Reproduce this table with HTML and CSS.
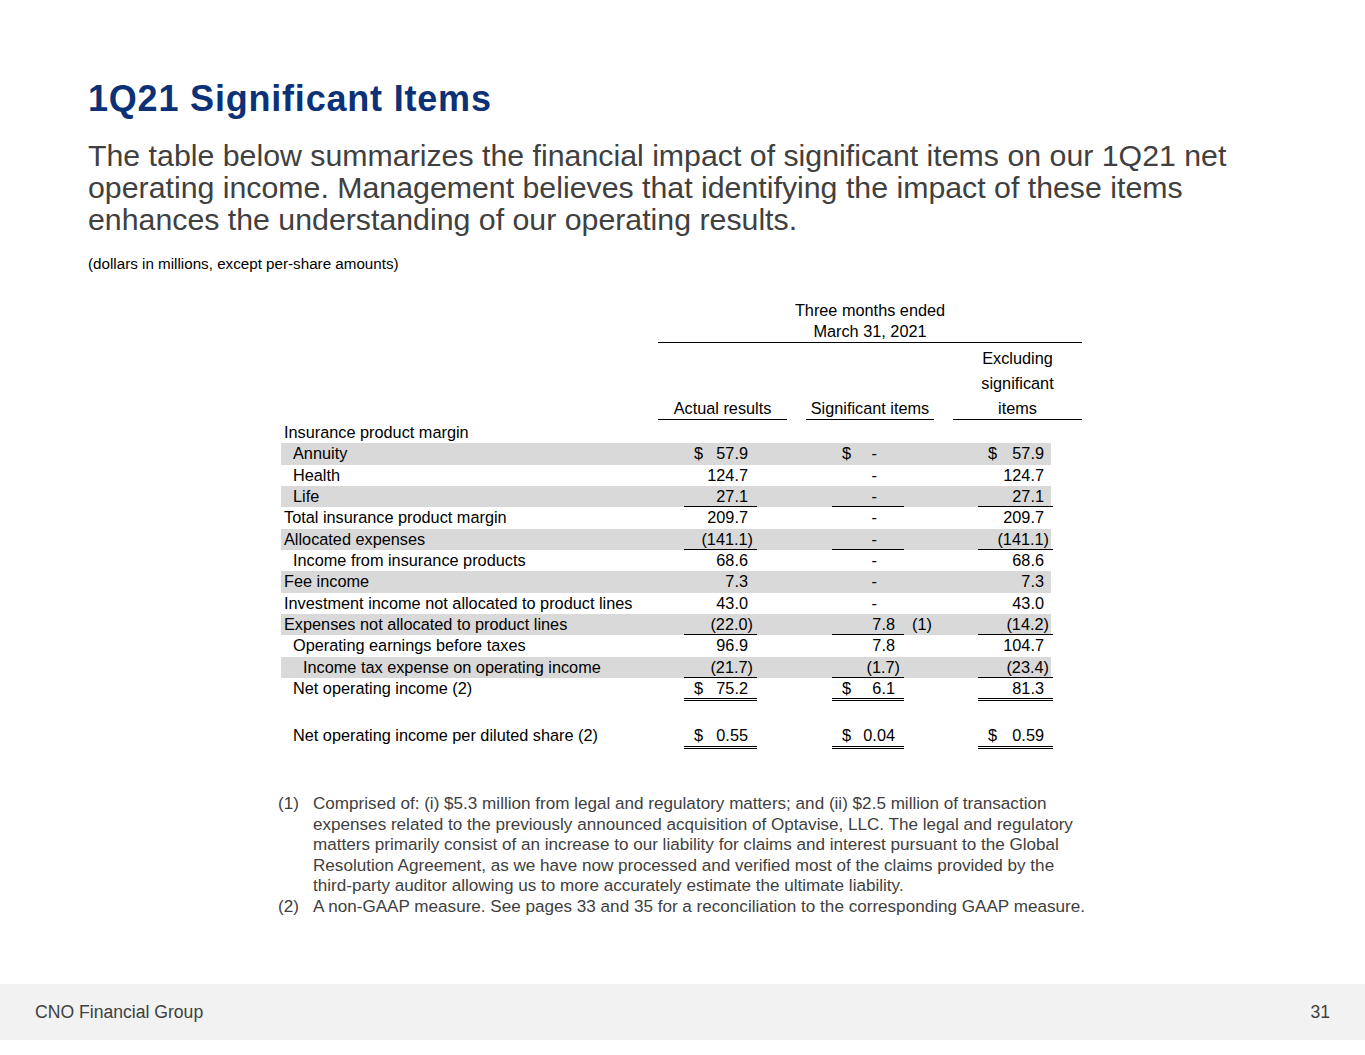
FILE: index.html
```html
<!DOCTYPE html>
<html lang="en">
<head>
<meta charset="utf-8">
<title>1Q21 Significant Items</title>
<link rel="stylesheet" href="styles.css">
</head>
<body>
<div class="page">
  <main class="content">
    <h1 class="title">1Q21 Significant Items</h1>
    <p class="lead">The table below summarizes the financial impact of significant items on our 1Q21 net operating income. Management believes that identifying the impact of these items enhances the understanding of our operating results.</p>
    <p class="units">(dollars in millions, except per-share amounts)</p>

    <section class="fin">
      <div class="hdr1">
        <div class="hdr1-label"></div>
        <div class="period">Three months ended<br>March 31, 2021</div>
      </div>
      <div class="hdr2">
        <div></div>
        <div class="hcell"><span>Actual results</span></div>
        <div></div>
        <div class="hcell"><span>Significant items</span></div>
        <div></div>
        <div class="hcell"><span>Excluding</span><span>significant</span><span>items</span></div>
      </div>

      <div class="row"><div class="lbl">Insurance product margin</div></div>

      <div class="row shade">
        <div class="lbl i1">Annuity</div>
        <div class="v"><span class="cur">$</span><span class="n">57.9</span></div><div></div>
        <div class="v"><span class="cur">$</span><span class="n dash">-</span></div><div></div>
        <div class="v"><span class="cur">$</span><span class="n">57.9</span></div>
      </div>
      <div class="row">
        <div class="lbl i1">Health</div>
        <div class="v"><span class="n">124.7</span></div><div></div>
        <div class="v"><span class="n dash">-</span></div><div></div>
        <div class="v"><span class="n">124.7</span></div>
      </div>
      <div class="row shade">
        <div class="lbl i1">Life</div>
        <div class="v ul"><span class="n">27.1</span></div><div></div>
        <div class="v ul"><span class="n dash">-</span></div><div></div>
        <div class="v ul"><span class="n">27.1</span></div>
      </div>
      <div class="row">
        <div class="lbl">Total insurance product margin</div>
        <div class="v"><span class="n">209.7</span></div><div></div>
        <div class="v"><span class="n dash">-</span></div><div></div>
        <div class="v"><span class="n">209.7</span></div>
      </div>
      <div class="row shade">
        <div class="lbl">Allocated expenses</div>
        <div class="v ul"><span class="n neg">(141.1)</span></div><div></div>
        <div class="v ul"><span class="n dash">-</span></div><div></div>
        <div class="v ul"><span class="n neg">(141.1)</span></div>
      </div>
      <div class="row">
        <div class="lbl i1">Income from insurance products</div>
        <div class="v"><span class="n">68.6</span></div><div></div>
        <div class="v"><span class="n dash">-</span></div><div></div>
        <div class="v"><span class="n">68.6</span></div>
      </div>
      <div class="row shade">
        <div class="lbl">Fee income</div>
        <div class="v"><span class="n">7.3</span></div><div></div>
        <div class="v"><span class="n dash">-</span></div><div></div>
        <div class="v"><span class="n">7.3</span></div>
      </div>
      <div class="row">
        <div class="lbl">Investment income not allocated to product lines</div>
        <div class="v"><span class="n">43.0</span></div><div></div>
        <div class="v"><span class="n dash">-</span></div><div></div>
        <div class="v"><span class="n">43.0</span></div>
      </div>
      <div class="row shade">
        <div class="lbl">Expenses not allocated to product lines</div>
        <div class="v ul"><span class="n neg">(22.0)</span></div><div></div>
        <div class="v ul"><span class="n">7.8</span></div><div class="note">(1)</div>
        <div class="v ul"><span class="n neg">(14.2)</span></div>
      </div>
      <div class="row">
        <div class="lbl i1">Operating earnings before taxes</div>
        <div class="v"><span class="n">96.9</span></div><div></div>
        <div class="v"><span class="n">7.8</span></div><div></div>
        <div class="v"><span class="n">104.7</span></div>
      </div>
      <div class="row shade">
        <div class="lbl i2">Income tax expense on operating income</div>
        <div class="v ul"><span class="n neg">(21.7)</span></div><div></div>
        <div class="v ul"><span class="n neg">(1.7)</span></div><div></div>
        <div class="v ul"><span class="n neg">(23.4)</span></div>
      </div>
      <div class="row tot">
        <div class="lbl i1">Net operating income (2)</div>
        <div class="v dbl"><span class="cur">$</span><span class="n">75.2</span></div><div></div>
        <div class="v dbl"><span class="cur">$</span><span class="n">6.1</span></div><div></div>
        <div class="v dbl"><span class="n">81.3</span></div>
      </div>
      <div class="spacer"></div>
      <div class="row tot">
        <div class="lbl i1">Net operating income per diluted share (2)</div>
        <div class="v dbl"><span class="cur">$</span><span class="n">0.55</span></div><div></div>
        <div class="v dbl"><span class="cur">$</span><span class="n">0.04</span></div><div></div>
        <div class="v dbl"><span class="cur">$</span><span class="n">0.59</span></div>
      </div>
    </section>

    <ol class="notes">
      <li><span class="mark">(1)</span><span class="ntext">Comprised of: (i) $5.3 million from legal and regulatory matters; and (ii) $2.5 million of transaction expenses related to the previously announced acquisition of Optavise, LLC. The legal and regulatory matters primarily consist of an increase to our liability for claims and interest pursuant to the Global Resolution Agreement, as we have now processed and verified most of the claims provided by the <span class="nowrap">third-party</span> auditor allowing us to more accurately estimate the ultimate liability.</span></li>
      <li><span class="mark">(2)</span><span class="ntext">A non-GAAP measure. See pages 33 and 35 for a reconciliation to the corresponding GAAP measure.</span></li>
    </ol>
  </main>
  <footer class="footer">
    <span>CNO Financial Group</span>
    <span>31</span>
  </footer>
</div>
</body>
</html>
```

FILE: styles.css
```css
* { box-sizing: border-box; }
html, body { margin: 0; padding: 0; background: #ffffff; }
body {
  font-family: "Liberation Sans", Arial, sans-serif;
  color: #000;
}
.page {
  width: 1365px;
  height: 1055px;
  display: flex;
  flex-direction: column;
}
.content {
  flex: 1;
  padding: 79px 0 0 88px;
}
.title {
  margin: 0;
  font-size: 36px;
  line-height: 40px;
  letter-spacing: 0.8px;
  font-weight: bold;
  color: #0c3176;
}
.lead {
  margin: 21px 0 0;
  width: 1175px;
  font-size: 30.3px;
  line-height: 32px;
  color: #404040;
}
.units {
  margin: 20px 0 0;
  font-size: 15.2px;
  line-height: 16px;
  color: #000;
}

/* table */
.fin {
  margin: 28px 0 0 193px;
  font-size: 16.3px;
  color: #000;
  width: 801px;
}
.hdr1 {
  display: grid;
  grid-template-columns: 377px 424px;
}
.period {
  text-align: center;
  line-height: 21px;
  border-bottom: 1px solid #000;
}
.hdr2 {
  display: grid;
  grid-template-columns: 377px 129px 19px 128px 19px 129px;
  align-items: end;
  padding-top: 1px;
}
.hcell {
  display: flex;
  flex-direction: column;
  align-items: center;
  border-bottom: 1px solid #000;
}
.hcell span {
  display: block;
  line-height: 21px;
  margin-top: 4px;
}
.row {
  display: grid;
  grid-template-columns: 403px 73px 75px 72px 74px 75px;
  height: 21.33px;
  line-height: 20px;
  white-space: nowrap;
}
.hdr2 + .row { margin-top: 2px; }
.shade {
  background: linear-gradient(#d9d9d9, #d9d9d9) no-repeat 0 0 / 770px 100%;
}
.lbl { padding-left: 3px; }
.lbl.i1 { padding-left: 12px; }
.lbl.i2 { padding-left: 22px; }
.v {
  display: flex;
  justify-content: flex-end;
  padding: 0 4px 0 10px;
  height: 100%;
}
.v .cur { margin-right: auto; }
.n { padding-right: 5px; }
.n.neg { padding-right: 0; }
.n.dash { padding-right: 23px; }
.ul { border-bottom: 1px solid #000; }
.dbl { border-bottom: 3px double #000; }
.note { padding-left: 8px; }
.row.tot { height: 22px; }
.spacer { height: 24px; }
.row.tot + .spacer + .row.tot { height: 24px; line-height: 22px; }

/* footnotes */
.notes {
  list-style: none;
  margin: 46px 0 0 190px;
  padding: 0;
  width: 810px;
  font-size: 17.1px;
  line-height: 20.6px;
  color: #404040;
}
.notes li { display: flex; }
.notes .mark { width: 35px; flex: none; }
.notes .ntext { flex: 1; }
.nowrap { white-space: nowrap; }

/* footer */
.footer {
  height: 56px;
  margin-bottom: 15px;
  background: #f2f2f2;
  display: flex;
  justify-content: space-between;
  align-items: center;
  padding: 0 35px 0 35px;
  font-size: 17.6px;
  color: #404040;
}
```
